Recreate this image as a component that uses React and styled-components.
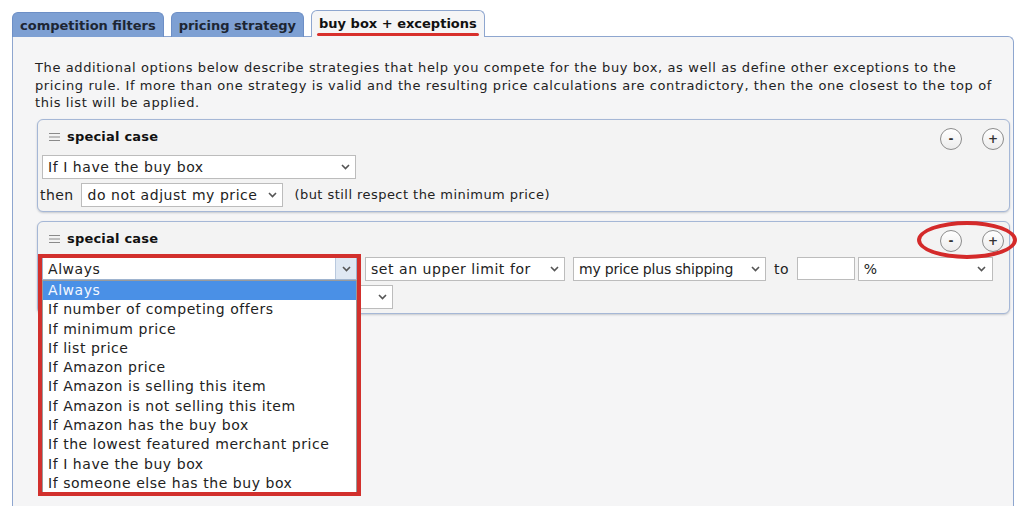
import React from "react";
import styled, { createGlobalStyle, css } from "styled-components";

const GlobalStyle = createGlobalStyle`
  html, body {
    margin: 0;
    padding: 0;
    background: #ffffff;
    overflow: hidden;
  }
  body {
    font-family: "DejaVu Sans", Verdana, sans-serif;
    color: #222;
  }
`;

const conditionOptions = [
  "Always",
  "If number of competing offers",
  "If minimum price",
  "If list price",
  "If Amazon price",
  "If Amazon is selling this item",
  "If Amazon is not selling this item",
  "If Amazon has the buy box",
  "If the lowest featured merchant price",
  "If I have the buy box",
  "If someone else has the buy box",
];

const Chevron = () => (
  <svg width="9" height="6" viewBox="0 0 9 6">
    <path d="M1 1 L4.5 4.5 L8 1" fill="none" stroke="#555" strokeWidth="1.6" />
  </svg>
);

const Grip = () => (
  <svg width="11" height="10" viewBox="0 0 11 10">
    <path d="M0 1.5 H11 M0 5 H11 M0 8.5 H11" stroke="#8a8a8a" strokeWidth="1" />
  </svg>
);

const Select = ({ width, value, open, spacing }) => (
  <SelectBox $width={width} $open={open} $spacing={spacing}>
    <SelectText>{value}</SelectText>
    <Arrow $open={open}>
      <Chevron />
    </Arrow>
  </SelectBox>
);

const CaseHeader = ({ marked }) => (
  <Header>
    <Title>
      <Grip />
      <span>special case</span>
    </Title>
    <RoundBtns>
      <RoundBtn>-</RoundBtn>
      <RoundBtn>+</RoundBtn>
      {marked && <RedEllipse />}
    </RoundBtns>
  </Header>
);

export default function App() {
  return (
    <Page>
      <GlobalStyle />
      <TabBar>
        <Tab>competition filters</Tab>
        <Tab>pricing strategy</Tab>
        <Tab $active>
          <Underlined>buy box + exceptions</Underlined>
        </Tab>
      </TabBar>
      <Panel>
        <Intro>
          The additional options below describe strategies that help you compete for the buy box, as well as define other exceptions to the
          <br />
          pricing rule. If more than one strategy is valid and the resulting price calculations are contradictory, then the one closest to the top of
          <br />
          this list will be applied.
        </Intro>

        <CaseBox>
          <CaseHeader />
          <Row>
            <Select width={314} value="If I have the buy box" />
          </Row>
          <Row $indent={-2}>
            <Label>then</Label>
            <Select width={202} value="do not adjust my price" />
            <Note>(but still respect the minimum price)</Note>
          </Row>
        </CaseBox>

        <CaseBox>
          <CaseHeader marked />
          <Row>
            <OpenSelect>
              <Select width={315} value="Always" open />
              <Dropdown>
                {conditionOptions.map((opt, i) => (
                  <Option key={opt} $selected={i === 0}>
                    {opt}
                  </Option>
                ))}
              </Dropdown>
              <RedFrame />
            </OpenSelect>
            <Select width={200} value="set an upper limit for" />
            <Select width={193} value="my price plus shipping" spacing={-0.2} />
            <Label>to</Label>
            <NumInput />
            <Select width={135} value="%" />
          </Row>
          <Row>
            <Select width={351} value="" />
          </Row>
        </CaseBox>
      </Panel>
    </Page>
  );
}

const Page = styled.div`
  padding: 10px 10px 0 12px;
  height: 506px;
  box-sizing: border-box;
  display: flex;
  flex-direction: column;
  overflow: hidden;
`;

const TabBar = styled.div`
  display: flex;
  align-items: flex-end;
  gap: 7px;
  position: relative;
  z-index: 2;
  margin-bottom: -1px;
`;

const Tab = styled.div`
  height: 25px;
  padding: 0 7px;
  display: flex;
  align-items: center;
  font-size: 13px;
  font-weight: bold;
  color: #1d2633;
  background: #7ea0d3;
  border: 1px solid #6d8fc6;
  border-bottom: none;
  border-radius: 6px 6px 0 0;
  box-sizing: border-box;
  white-space: nowrap;

  ${(p) =>
    p.$active &&
    css`
      height: 27px;
      background: #f5f5f6;
      border-color: #8ea6cf;
      color: #111;
      padding-bottom: 2px;
    `}
`;

const Underlined = styled.span`
  position: relative;

  &::after {
    content: "";
    position: absolute;
    left: -2px;
    right: -2px;
    bottom: -5px;
    height: 3px;
    border-radius: 2px;
    background: #d8302c;
  }
`;

const Panel = styled.div`
  flex: 1;
  border: 1px solid #8ea6cf;
  border-bottom: none;
  border-radius: 0 6px 0 0;
  background: #f5f5f6;
  padding: 22px 3px 0 24px;
  box-sizing: border-box;
`;

const Intro = styled.p`
  margin: 0 0 7px -2px;
  font-size: 13px;
  letter-spacing: 0.6px;
  line-height: 17.5px;
  color: #222;
  white-space: nowrap;
`;

const CaseBox = styled.div`
  border: 1px solid #a5b7d6;
  border-radius: 6px;
  background: #f3f3f3;
  box-shadow: 0 1px 2px rgba(60, 70, 90, 0.25);
  padding: 8px 5px 4px 4px;
  margin-bottom: 9px;
`;

const Header = styled.div`
  display: flex;
  align-items: center;
  justify-content: space-between;
  height: 22px;
  margin-bottom: 5px;
`;

const Title = styled.div`
  display: flex;
  align-items: center;
  gap: 7px;
  padding-left: 7px;
  font-size: 13px;
  letter-spacing: 0.2px;
  font-weight: bold;
  color: #111;
  margin-top: -4px;
`;

const RoundBtns = styled.div`
  position: relative;
  display: flex;
  gap: 20px;
`;

const RoundBtn = styled.div`
  width: 22px;
  height: 22px;
  border-radius: 50%;
  border: 1px solid #8c8c8c;
  background: linear-gradient(#ffffff, #ececec);
  box-sizing: border-box;
  display: flex;
  align-items: center;
  justify-content: center;
  font-size: 12px;
  font-weight: bold;
  color: #333;
`;

const RedEllipse = styled.div`
  position: absolute;
  left: -23px;
  top: -9px;
  width: 100px;
  height: 38px;
  border: 4px solid #d42a2a;
  border-radius: 50%;
  box-sizing: border-box;
  pointer-events: none;
`;

const Row = styled.div`
  display: flex;
  align-items: center;
  gap: 8px;
  margin-bottom: 4px;
  margin-left: ${(p) => p.$indent || 0}px;

  &:last-child {
    margin-bottom: 0;
  }
`;

const SelectBox = styled.div`
  width: ${(p) => p.$width}px;
  height: ${(p) => (p.$open ? 23 : 24)}px;
  box-sizing: border-box;
  border: 1px solid #bcbcbc;
  background: #fff;
  display: flex;
  align-items: center;
  justify-content: space-between;
  padding-left: 5px;
  font-size: 14px;
  letter-spacing: ${(p) => (p.$spacing ?? 0.55)}px;
  color: #222;
  flex-shrink: 0;

  ${(p) =>
    p.$open &&
    css`
      border-color: #9fb4cf;
    `}
`;

const SelectText = styled.span`
  white-space: nowrap;
  overflow: hidden;
`;

const Arrow = styled.span`
  width: 20px;
  flex-shrink: 0;
  height: 100%;
  display: flex;
  align-items: center;
  justify-content: center;
  ${(p) =>
    p.$open &&
    css`
      background: #dfe8f3;
      border-left: 1px solid #b9c9de;
    `}
`;

const Label = styled.span`
  font-size: 14px;
  letter-spacing: 0.4px;
  color: #222;
`;

const Note = styled.span`
  font-size: 13px;
  letter-spacing: 0.45px;
  color: #222;
  margin-left: 3px;
`;

const NumInput = styled.div`
  width: 58px;
  height: 23px;
  box-sizing: border-box;
  border: 1px solid #bcbcbc;
  background: #fff;
  margin-right: -5px;
`;

const OpenSelect = styled.div`
  position: relative;
  z-index: 3;
`;

const Dropdown = styled.div`
  position: absolute;
  left: 0;
  top: 23px;
  width: 315px;
  background: #fff;
  border: 1px solid #9a9a9a;
  box-sizing: border-box;
`;

const Option = styled.div`
  height: 19.3px;
  line-height: 19px;
  padding-left: 5px;
  font-size: 14px;
  letter-spacing: 0.55px;
  color: #222;
  white-space: nowrap;

  ${(p) =>
    p.$selected &&
    css`
      background: #4a90e6;
      color: #f4f8ff;
    `}
`;

const RedFrame = styled.div`
  position: absolute;
  left: -4px;
  top: -3px;
  width: 323px;
  height: 242px;
  border: 4px solid #d2302d;
  box-sizing: border-box;
  pointer-events: none;
`;
